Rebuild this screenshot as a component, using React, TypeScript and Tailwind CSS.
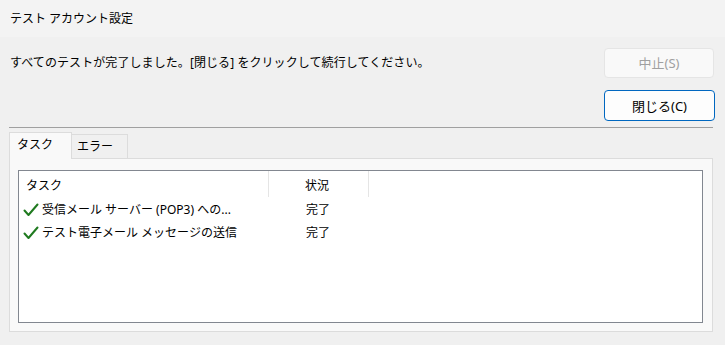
import React from "react";

const Check = () => (
  <svg width="16" height="14" viewBox="0 0 16 14" className="shrink-0">
    <path d="M1.5 7.5 L5.5 12 L14.5 1.5" fill="none" stroke="#1f7a1f" strokeWidth="2" strokeLinecap="round" strokeLinejoin="round" />
  </svg>
);

export default function App() {
  return (
    <div
      className="w-[725px] h-[345px] bg-[#f0f0f0] text-[12px] leading-[16px] text-black overflow-hidden"
      style={{ fontFamily: '"Noto Sans", "Noto Sans CJK JP", sans-serif' }}
    >
      <div className="h-[37px] bg-[#f3f3f3] flex items-center pl-[10px]">テスト アカウント設定</div>
      <div className="pl-[9px] pr-[12px]">
        <div className="mt-[11px] flex items-center justify-between">
          <span className="pl-px tracking-[0.08px]">すべてのテストが完了しました。[閉じる] をクリックして続行してください。</span>
          <button className="w-[110px] h-[30px] mr-[-1px] rounded-[4px] border border-[#e5e5e5] bg-[#f9f9f9] text-[#a0a0a0] text-[13px] flex items-center justify-center">
            中止(S)
          </button>
        </div>
        <div className="mt-[12px] flex justify-end">
          <button className="w-[111px] h-[31px] mr-[-2px] rounded-[4px] border border-[#0067c0] bg-[#fdfdfd] text-[13px] flex items-center justify-center">
            閉じる(C)
          </button>
        </div>
        <div className="mt-[6px] h-px bg-[#a0a0a0]" />
        <div className="mt-[4px] flex items-end">
          <div className="relative z-10 -mb-px w-[63px] h-[27px] bg-[#f9f9f9] border border-b-0 border-[#dcdcdc] pl-[7px] pt-[4px]">
            タスク
          </div>
          <div className="w-[56px] h-[24px] border border-l-0 border-b-0 border-[#dcdcdc] bg-[#f0f0f0] pl-[5px] pt-[4px]">
            エラー
          </div>
        </div>
        <div className="h-[174px] border border-[#dcdcdc] bg-[#f9f9f9] pt-[11px] pl-[8px] pr-[9px] pb-[8px]">
          <div className="h-full border border-[#828790] bg-white">
            <div className="flex h-[26px]">
              <div className="w-[250px] h-full border-r border-[#e5e5e5] pl-[7px] pt-[7px]">タスク</div>
              <div className="w-[100px] h-full border-r border-[#e5e5e5] pl-[36px] pt-[7px]">状況</div>
            </div>
            <div className="flex h-[23px] items-center pt-[2px]">
              <div className="w-[250px] flex items-center pl-[4px] gap-[3px] whitespace-nowrap overflow-hidden">
                <Check />
                <span>受信メール サーバー (POP3) への...</span>
              </div>
              <div className="pl-[37px]">完了</div>
            </div>
            <div className="flex h-[23px] items-center pt-[2px]">
              <div className="w-[250px] flex items-center pl-[4px] gap-[3px] whitespace-nowrap overflow-hidden">
                <Check />
                <span>テスト電子メール メッセージの送信</span>
              </div>
              <div className="pl-[37px]">完了</div>
            </div>
          </div>
        </div>
      </div>
    </div>
  );
}
